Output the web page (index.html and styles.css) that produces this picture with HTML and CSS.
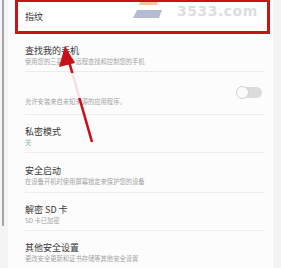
FILE: index.html
```html
<!DOCTYPE html>
<html lang="zh-CN">
<head>
<meta charset="utf-8">
<link rel="stylesheet" href="styles.css">
</head>
<body>
<div class="page">
  <div class="scroll"></div>
  <div class="list">
    <div class="row highlight"><span class="title">指纹</span></div>
    <div class="row r-find">
      <div class="inner">
        <span class="title">查找我的手机</span>
        <span class="sub">使用您的三星帐户远程查找和控制您的手机</span>
      </div>
    </div>
    <div class="row r-unknown">
      <div class="inner with-toggle">
        <span class="sub">允许安装来自未知来源的应用程序。</span>
        <span class="toggle"><span class="knob"></span></span>
      </div>
    </div>
    <div class="row">
      <div class="inner">
        <span class="title">私密模式</span>
        <span class="sub teal">关</span>
      </div>
    </div>
    <div class="row r-boot">
      <div class="inner">
        <span class="title">安全启动</span>
        <span class="sub">在设备开机时使用屏幕锁定来保护您的设备</span>
      </div>
    </div>
    <div class="row">
      <div class="inner">
        <span class="title">解密 SD 卡</span>
        <span class="sub">SD 卡已加密</span>
      </div>
    </div>
    <div class="row last">
      <div class="inner">
        <span class="title">其他安全设置</span>
        <span class="sub">更改安全更新和证书存储等其他安全设置</span>
      </div>
    </div>
  </div>
</div>
<div class="watermark">
  <svg class="logo" width="34" height="18" viewBox="0 0 34 18">
    <path d="M9 0 H27 L26 3 H8 Z" fill="#f3c79a"/>
    <path d="M6 8 H31 L28 16 H2 Z" fill="#b3bcd0"/>
  </svg>
  <span class="wm-text">3533.com</span>
</div>
<svg class="arrow" width="281" height="268" viewBox="0 0 281 268">
  <line x1="92" y1="142" x2="68" y2="58" stroke="#c8101a" stroke-width="2.6"/>
  <polygon points="65,46 59,67 75,63" fill="#c8101a"/>
  <rect x="40" y="73" width="80" height="25" fill="#fcfcfc" opacity="0.88"/>
</svg>
</body>
</html>
```

FILE: styles.css
```css
html, body {
  margin: 0;
  padding: 0;
}
body {
  width: 281px;
  height: 268px;
  overflow: hidden;
  background: #f4f4f4;
  font-family: "Noto Sans CJK SC", "Noto Sans", sans-serif;
  position: relative;
}
.page {
  display: flex;
  align-items: flex-start;
}
.scroll {
  width: 2px;
  height: 226px;
  margin-left: 2px;
  background: #a4a4a4;
  flex: none;
}
.list {
  margin-left: 4px;
  width: 265px;
  background: #fcfcfc;
  display: flex;
  flex-direction: column;
}
.row {
  padding-left: 17px;
  display: flex;
  flex-direction: column;
}
.inner {
  margin-right: 8px;
  border-bottom: 1px solid #ececec;
  display: flex;
  flex-direction: column;
  justify-content: center;
  height: 38px;
  padding-top: 5px;
  box-sizing: border-box;
}
.row.r-boot .inner {
  height: 40px;
}
.row.last .inner {
  border-bottom: none;
}
.highlight {
  margin: 0 3px 0 7px;
  padding-left: 7px;
  height: 34px;
  box-sizing: border-box;
  border: 3px solid #cc1119;
  border-top-width: 2px;
  background: #fefefe;
  justify-content: center;
}
.r-unknown .inner {
  height: 43px;
  position: relative;
  justify-content: flex-end;
  padding-bottom: 8px;
}
.title {
  font-size: 9px;
  line-height: 12px;
  color: #353535;
}
.sub {
  font-size: 6.3px;
  line-height: 9px;
  color: #a4a4a4;
}
.sub.teal {
  color: #8fb3b0;
}
.toggle {
  position: absolute;
  right: 3px;
  top: 15px;
  width: 25px;
  height: 11px;
  border-radius: 6px;
  background: #dcdcdc;
}
.knob {
  position: absolute;
  left: -1px;
  top: -1px;
  width: 11px;
  height: 11px;
  border-radius: 50%;
  background: #fbfbfb;
  border: 1px solid #cfcfcf;
}
.watermark {
  position: absolute;
  left: 131px;
  top: 0;
  display: flex;
  align-items: center;
  gap: 12px;
  height: 22px;
}
.wm-text {
  font-family: "DejaVu Sans", sans-serif;
  font-weight: bold;
  font-size: 14px;
  letter-spacing: 0.5px;
  color: #dcdde3;
}
.arrow {
  position: absolute;
  left: 0;
  top: 0;
}
```
